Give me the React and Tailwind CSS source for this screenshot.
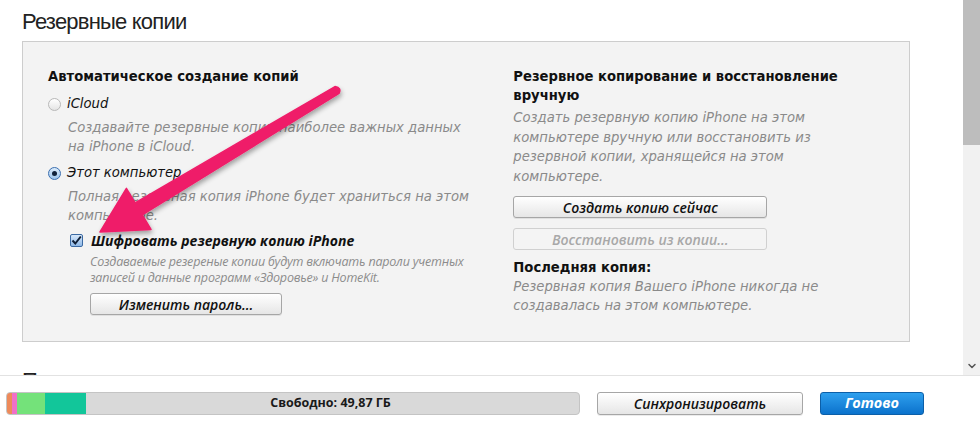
import { ChevronDown } from 'lucide-react'

const ui = { fontFamily: '"DejaVu Sans", Verdana, sans-serif' }
const alt = { fontFamily: '"Open Sans", "DejaVu Sans", sans-serif' }
const head = { fontFamily: '"Liberation Sans", Arial, sans-serif' }

function Radio({ checked }) {
  return (
    <span className={`inline-flex items-center justify-center w-[13px] h-[13px] rounded-full border shrink-0 ${checked ? 'border-[#3a6fb0] bg-gradient-to-b from-[#dcecfb] to-[#9cc4ec]' : 'border-[#b8b8b8] bg-gradient-to-b from-white to-[#e4e4e4]'}`}>
      {checked && <span className="w-[5px] h-[5px] rounded-full bg-[#10223a]" />}
    </span>
  )
}

function Button({ children, disabled, className = '' }) {
  return (
    <div
      style={alt}
      className={`h-[22px] flex items-center justify-center rounded-[3px] border italic font-semibold text-[14px] ${disabled ? 'border-[#d0d0d0] text-[#a8a8a8] bg-[#f4f4f4]' : 'border-[#a6a6a6] text-[#111] bg-gradient-to-b from-white to-[#e6e6e6] shadow-[0_1px_0_rgba(0,0,0,0.08)]'} ${className}`}
    >
      {children}
    </div>
  )
}

export default function App() {
  return (
    <div className="relative w-[980px] h-[425px] bg-white overflow-hidden">
      {/* Scrollable content */}
      <div className="h-[376px] flex border-b border-[#e2e2e2]">
        <div className="flex-1 pl-[22px] pr-[53px] pt-[7px] overflow-hidden">
          <h1 style={head} className="text-[22px] tracking-[-0.8px] leading-[30px] text-[#222] font-normal">Резервные копии</h1>
          <div className="mt-[4px] h-[301px] border-[1.5px] border-[#cdcdcd] bg-[#f3f3f3] flex pl-[25px] pt-[23px]">
            {/* Left column */}
            <div style={ui} className="w-[440px] text-[13.2px]">
              <div className="font-bold text-[#111] leading-[20px] mt-[2px]">Автоматическое создание копий</div>
              <div className="flex items-center gap-[6px] mt-[7px] h-[20px]">
                <Radio />
                <span className="italic text-[#111]">iCloud</span>
              </div>
              <div className="pl-[20px] italic text-[#8a8a8a] leading-[19px] mt-[4px]">
                Создавайте резервные копии наиболее важных данных<br />на iPhone в iCloud.
              </div>
              <div className="flex items-center gap-[6px] mt-[7px] h-[20px]">
                <Radio checked />
                <span className="italic text-[#111]">Этот компьютер</span>
              </div>
              <div className="pl-[20px] italic text-[#8a8a8a] leading-[19px] mt-[4px]">
                Полная резервная копия iPhone будет храниться на этом<br />компьютере.
              </div>
              <div className="pl-[22px] mt-[5px]">
                <div className="flex items-center gap-[8px] h-[20px]">
                  <span className="w-[13px] h-[13px] border border-[#3b6aa3] bg-gradient-to-b from-[#d6e8fb] to-[#8fb8e6] flex items-center justify-center rounded-[2px]">
                    <svg width="11" height="11" viewBox="0 0 11 11"><path d="M1.5 5.5 L4.3 8.5 L9.8 1.5" fill="none" stroke="#0f1f36" strokeWidth="2" /></svg>
                  </span>
                  <span style={alt} className="italic font-bold text-[14px] text-[#111]">Шифровать резервную копию iPhone</span>
                </div>
                <div className="pl-[20px]">
                  <div style={alt} className="italic text-[12.5px] leading-[16px] text-[#8c8c8c] mt-[4px] tracking-[-0.2px]">
                    Создаваемые резереные копии будут включать пароли учетных<br />записей и данные программ «Здоровье» и HomeKit.
                  </div>
                  <Button className="w-[192px] mt-[7px] font-bold">Изменить пароль...</Button>
                </div>
              </div>
            </div>
            {/* Right column */}
            <div style={ui} className="w-[400px] text-[13.2px] ml-[30px]">
              <div className="font-bold text-[#111] leading-[19px] mt-[2px]">
                Резервное копирование и восстановление<br />вручную
              </div>
              <div className="italic text-[#8a8a8a] leading-[19.5px] mt-[3px]">
                Создать резервную копию iPhone на этом<br />компьютере вручную или восстановить из<br />резервной копии, хранящейся на этом<br />компьютере.
              </div>
              <Button className="w-[254px] mt-[10px]">Создать копию сейчас</Button>
              <Button disabled className="w-[254px] mt-[10px]">Восстановить из копии...</Button>
              <div className="font-bold text-[#111] leading-[19px] mt-[8px]">Последняя копия:</div>
              <div className="italic text-[#8a8a8a] leading-[19px]">
                Резервная копия Вашего iPhone никогда не<br />создавалась на этом компьютере.
              </div>
            </div>
          </div>
          <h2 style={head} className="mt-[24px] text-[22px] tracking-[-0.8px] leading-[30px] text-[#222]">Параметры</h2>
        </div>
        {/* Scrollbar */}
        <div className="w-[17px] bg-[#f1f1f1] flex flex-col justify-between">
          <div className="h-[145px] bg-[#bdbdbd]" />
          <ChevronDown size={12} strokeWidth={3} className="text-[#555] mx-auto mb-[3px]" />
        </div>
      </div>

      {/* Bottom bar */}
      <div className="flex items-center h-[49px] pl-[6px] pt-[5px]">
        <div className="relative w-[574px] h-[23px] rounded-[4px] border border-[#c4c4c4] bg-[#d9d9d9] flex overflow-hidden">
          <div className="w-[5px] bg-[#ee8a5a]" />
          <div className="w-[5px] bg-[#f070c8]" />
          <div className="w-[28px] bg-[#74e27a]" />
          <div className="w-[41px] bg-[#12c69a]" />
          <div style={alt} className="absolute inset-0 flex items-center justify-center pl-[75px] text-[12.5px] font-bold text-[#1a1a1a]">Свободно: 49,87 ГБ</div>
        </div>
        <Button className="w-[206px] h-[23px] ml-[17px] text-[14.5px]">Синхронизировать</Button>
        <div style={alt} className="w-[104px] h-[23px] ml-[17px] rounded-[3px] border border-[#0c5fa8] bg-gradient-to-b from-[#2ea0ee] to-[#0a72cc] text-white italic font-bold text-[14.5px] flex items-center justify-center">Готово</div>
      </div>

      {/* Pink arrow overlay */}
      <svg className="absolute left-0 top-0 pointer-events-none" width="980" height="425">
        <defs>
          <filter id="sh" x="-20%" y="-20%" width="140%" height="140%">
            <feGaussianBlur in="SourceAlpha" stdDeviation="2.5" />
            <feOffset dx="1" dy="3" />
            <feComponentTransfer><feFuncA type="linear" slope="0.35" /></feComponentTransfer>
            <feMerge><feMergeNode /><feMergeNode in="SourceGraphic" /></feMerge>
          </filter>
        </defs>
        <path
          d="M335 86.6 L135.1 202.9 L126.4 188.3 L100 232 L151 229.5 L142.3 214.9 L339 93.4 Q342 88 335 86.6 Z"
          fill="#ef1d69"
          stroke="#ef1d69"
          strokeLinejoin="round"
          strokeWidth="1.5"
          filter="url(#sh)"
        />
      </svg>
    </div>
  )
}
